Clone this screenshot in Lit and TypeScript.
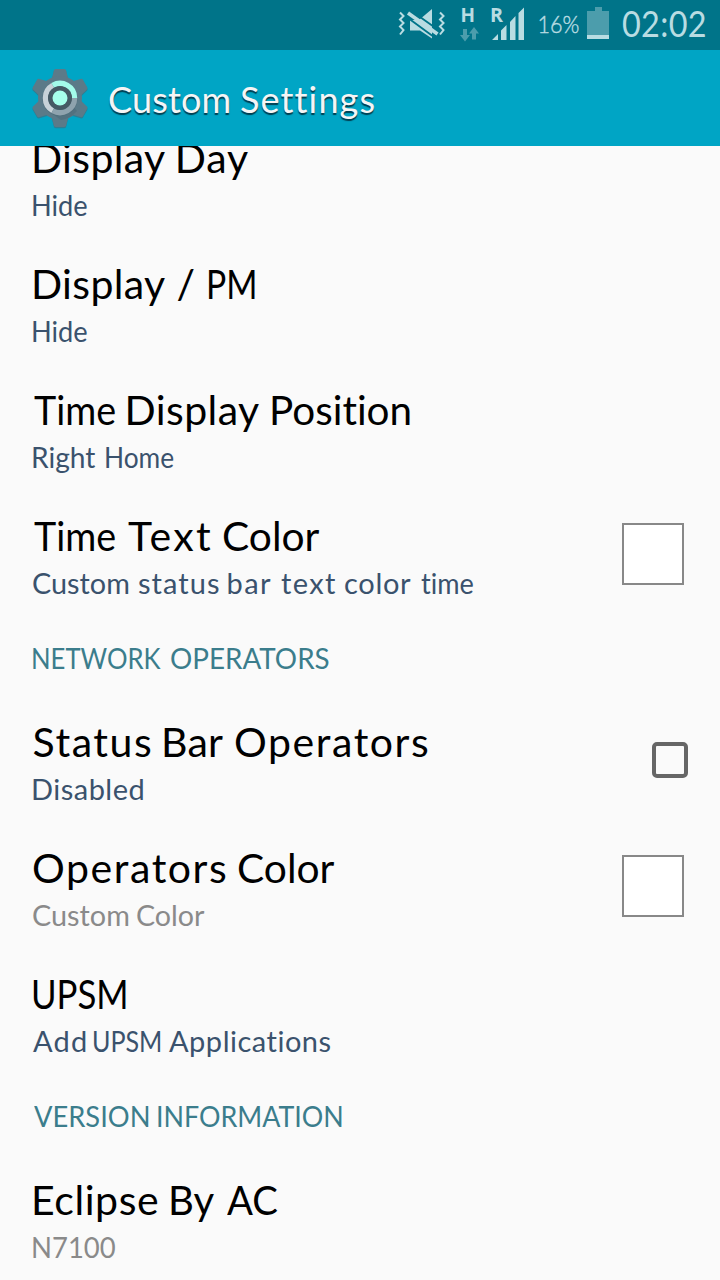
import { LitElement, html, css, svg, nothing } from "lit";
import { customElement, property, state } from "lit/decorators.js";
import { styleMap } from "lit/directives/style-map.js";

/** A word with the left and right edge of its ink, in pixels. */
type Word = [string, number, number];

interface Entry {
  kind: "row" | "category";
  title: Word[];
  summary?: Word[];
  muted?: boolean;
  widget?: "swatch" | "checkbox";
}

const ENTRIES: Entry[] = [
  { kind: "row", title: [["Display", 34, 165], ["Day", 177.7, 248]], summary: [["Hide", 33, 87.5]] },
  { kind: "row", title: [["Display", 34, 165], ["/", 177.5, 195.5], ["PM", 208, 254.5]], summary: [["Hide", 33, 87.5]] },
  { kind: "row", title: [["Time", 33.5, 115], ["Display", 127.5, 259], ["Position", 272, 411]], summary: [["Right", 33, 96], ["Home", 106, 174]] },
  {
    kind: "row",
    title: [["Time", 33.5, 115], ["Text", 128, 211], ["Color", 223, 319.5]],
    summary: [["Custom", 33, 128], ["status", 138, 219], ["bar", 228.5, 271], ["text", 281, 336], ["color", 345, 411], ["time", 421, 474]],
    widget: "swatch",
  },
  { kind: "category", title: [["NETWORK", 33, 161.5], ["OPERATORS", 171, 329]] },
  { kind: "row", title: [["Status", 33.5, 151], ["Bar", 164, 223], ["Operators", 235, 428]], summary: [["Disabled", 33, 143.5]], widget: "checkbox" },
  { kind: "row", title: [["Operators", 33, 226], ["Color", 238, 334.5]], summary: [["Custom", 33, 128], ["Color", 137, 205]], muted: true, widget: "swatch" },
  { kind: "row", title: [["UPSM", 34, 126.5]], summary: [["Add", 33, 86], ["UPSM", 94, 161], ["Applications", 169, 331]] },
  { kind: "category", title: [["VERSION", 33.5, 148], ["INFORMATION", 158, 342]] },
  { kind: "row", title: [["Eclipse", 34, 158], ["By", 171, 214], ["AC", 227, 277.5]], summary: [["N7100", 33, 115]], muted: true },
];

/** One line of text whose words are tracked or condensed to fill their extents. */
@customElement("tracked-line")
export class TrackedLine extends LitElement {
  @property({ attribute: false }) words: Word[] = [];
  @property({ type: Number }) origin = 0;
  @property({ type: Number }) condense = 1;
  @state() private metrics: { spacing: number; shift: number; scale: number; width: number }[] = [];

  static styles = css`
    :host { display: block; white-space: pre; font-variant-ligatures: none; }
    .word { display: inline-block; transform-origin: 0 50%; }
  `;

  firstUpdated() {
    const cs = getComputedStyle(this);
    const ctx = document.createElement("canvas").getContext("2d")!;
    ctx.font = `${cs.fontWeight} ${cs.fontSize} ${cs.fontFamily}`;
    const space = ctx.measureText(" ").width;
    let pen = this.origin;
    this.metrics = this.words.map(([text, left, right], i) => {
      const m = ctx.measureText(text);
      const ink = m.actualBoundingBoxRight + m.actualBoundingBoxLeft;
      const scale = Math.min(this.condense, (right - left) / ink);
      const spacing = text.length > 1 ? ((right - left) / scale - ink) / (text.length - 1) : 0;
      const start = left + m.actualBoundingBoxLeft * scale;
      if (i) pen += space;
      const shift = start - pen;
      const width = (m.width + spacing * text.length) * scale;
      pen = start + width;
      return { spacing, shift, scale, width };
    });
  }

  render() {
    return this.words.map(([text], i) => {
      const m = this.metrics[i];
      const s: Record<string, string> = m
        ? { letterSpacing: `${m.spacing}px`, marginLeft: `${m.shift}px`, width: `${m.width}px` }
        : {};
      if (m && m.scale < 0.999) s.transform = `scaleX(${m.scale})`;
      return html`${i ? " " : nothing}<span class="word" style=${styleMap(s)}>${text}</span>`;
    });
  }
}

@customElement("status-bar")
export class StatusBar extends LitElement {
  static styles = css`
    :host { display: flex; height: 50px; background: #007489; color: #b9dce2; font-family: Lato, sans-serif; }
    .icons { display: block; flex: none; width: 222px; height: 50px; margin-left: 390px; }
    .glyph { font: 700 20px "Open Sans", sans-serif; fill: #b9dce2; }
    .percent { font: 300 23px Lato, sans-serif; fill: #b9dce2; stroke: #b9dce2; stroke-width: 0.4px; }
    .clock { font-size: 36px; line-height: 47px; font-weight: 400; }
  `;

  render() {
    return html`
      <svg class="icons" viewBox="390 0 222 50">
        <g fill="none" stroke="#b9dce2" stroke-width="2">
          <path d="M400 12.5l3.5 3.5-3.5 3.5 3.5 3.5-3.5 3.5 3.5 3.5-3.5 4.5" />
          <path d="M440 12.5l3.5 3.5-3.5 3.5 3.5 3.5-3.5 3.5 3.5 3.5-3.5 4.5" />
        </g>
        <path d="M410 20h9l13-11v29.500l-12-8h-10z" fill="#b9dce2" />
        <path d="M406 16.500l30 22M409.500 9.500l31 22" stroke="#007489" stroke-width="1.800" />
        <path d="M408 13l29.500 21" stroke="#b9dce2" stroke-width="3.600" />
        <text class="glyph" x="460.500" y="22" textLength="14.500" lengthAdjust="spacingAndGlyphs">H</text>
        <text class="glyph" x="490" y="22" textLength="13" lengthAdjust="spacingAndGlyphs">R</text>
        <path fill="#4c9dac" d="M463 29h4v6h3l-5 6.500-5-6.500h3zM472 39.500h4v-6h3l-5-6.500-5 6.500h3z" />
        <path fill="#b9dce2" d="M492 40l6-6v6zM501 40V30.500l5.500-5.500V40zM510 40V22l5.500-6V40zM518.500 40V13l5.500-5.500V40z" />
        <text class="percent" x="537.500" y="33" textLength="42" lengthAdjust="spacingAndGlyphs">16%</text>
        <path fill="#4c9dac" d="M587 11h8V7h7v4h7v24h-22z" />
        <path fill="#b9dce2" d="M587 35h22v4h-22z" />
      </svg>
      <tracked-line class="clock" .origin=${612} .condense=${0.9} .words=${[["02:02", 622.5, 704.5]] as Word[]}></tracked-line>
    `;
  }
}

@customElement("app-root")
export class AppRoot extends LitElement {
  static styles = css`
    :host { display: flex; flex-direction: column; width: 720px; height: 1280px; overflow: hidden; background: #fafafa; font-family: Lato, sans-serif; color: #000; }
    status-bar { flex: none; }
    .header { flex: none; display: flex; height: 96px; background: #00a5c5; }
    .gear { display: block; width: 64px; height: 96px; margin-left: 28px; }
    .heading { color: #f5f5f5; font-size: 36px; line-height: 98px; text-shadow: 0 2px 1px rgba(0, 45, 60, 0.85); }
    .viewport { flex: 1; min-height: 0; overflow: hidden; }
    .list { margin-top: -33px; }
    .row { display: flex; justify-content: space-between; height: 126px; box-sizing: border-box; padding-top: 21px; }
    .title { font-size: 41px; line-height: 48px; }
    .summary { font-size: 29px; line-height: 36px; margin-top: 5px; color: #3a526d; }
    .muted { color: #8a8a8a; }
    .category { height: 80px; box-sizing: border-box; padding-top: 23px; font-size: 29px; line-height: 36px; color: #3b7d8c; }
    .swatch { width: 62px; height: 62px; box-sizing: border-box; border: 2px solid #888; background: #fff; margin: 11px 36px 0 0; }
    .checkbox { width: 36px; height: 36px; box-sizing: border-box; border: 4px solid #666; border-radius: 5px; margin: 24px 32px 0 0; }
  `;

  private gear() {
    const teeth = [0, 60, 120, 180, 240, 300].map(
      (a) => svg`<path d="M51 82L54 70Q54.500 69 56 69H64Q65.500 69 66 70L69 82Z" transform="rotate(${a} 60 98)" />`,
    );
    return html`
      <svg class="gear" viewBox="28 50 64 96">
        <g fill="#2c7f94" transform="translate(0 1.300)">${teeth}</g>
        <g fill="#5b7a88">${teeth}<circle cx="60" cy="98" r="22" /></g>
        <path d="M50 112L61 120Q70 119 77 111L73 106Z" fill="#52717f" />
        <circle cx="60" cy="98.700" r="17.500" fill="#506e7b" />
        <g fill="none" stroke-width="5.500">
          <path d="M52.750 110.560A14.500 14.500 0 0 1 52.750 85.440" stroke="#c7d2d8" />
          <path d="M52.750 85.440A14.500 14.500 0 0 1 74.500 98" stroke="#a3fbea" />
          <path d="M74.500 98A14.500 14.500 0 0 1 52.750 110.560" stroke="#8ea3ae" />
        </g>
        <circle cx="60" cy="98" r="12" fill="#455a64" />
        <circle cx="60" cy="98" r="7.500" fill="#a7ffeb" />
      </svg>
    `;
  }

  private entry(e: Entry) {
    if (e.kind === "category") {
      return html`<tracked-line class="category" .words=${e.title}></tracked-line>`;
    }
    return html`
      <div class="row">
        <div>
          <tracked-line class="title" .words=${e.title}></tracked-line>
          <tracked-line class="summary ${e.muted ? "muted" : ""}" .words=${e.summary ?? []}></tracked-line>
        </div>
        ${e.widget ? html`<div class=${e.widget}></div>` : nothing}
      </div>
    `;
  }

  render() {
    return html`
      <status-bar></status-bar>
      <div class="header">
        ${this.gear()}
        <tracked-line class="heading" .origin=${92} .words=${[["Custom", 109, 229.5], ["Settings", 241, 373.5]] as Word[]}></tracked-line>
      </div>
      <div class="viewport"><div class="list">${ENTRIES.map((e) => this.entry(e))}</div></div>
    `;
  }
}
